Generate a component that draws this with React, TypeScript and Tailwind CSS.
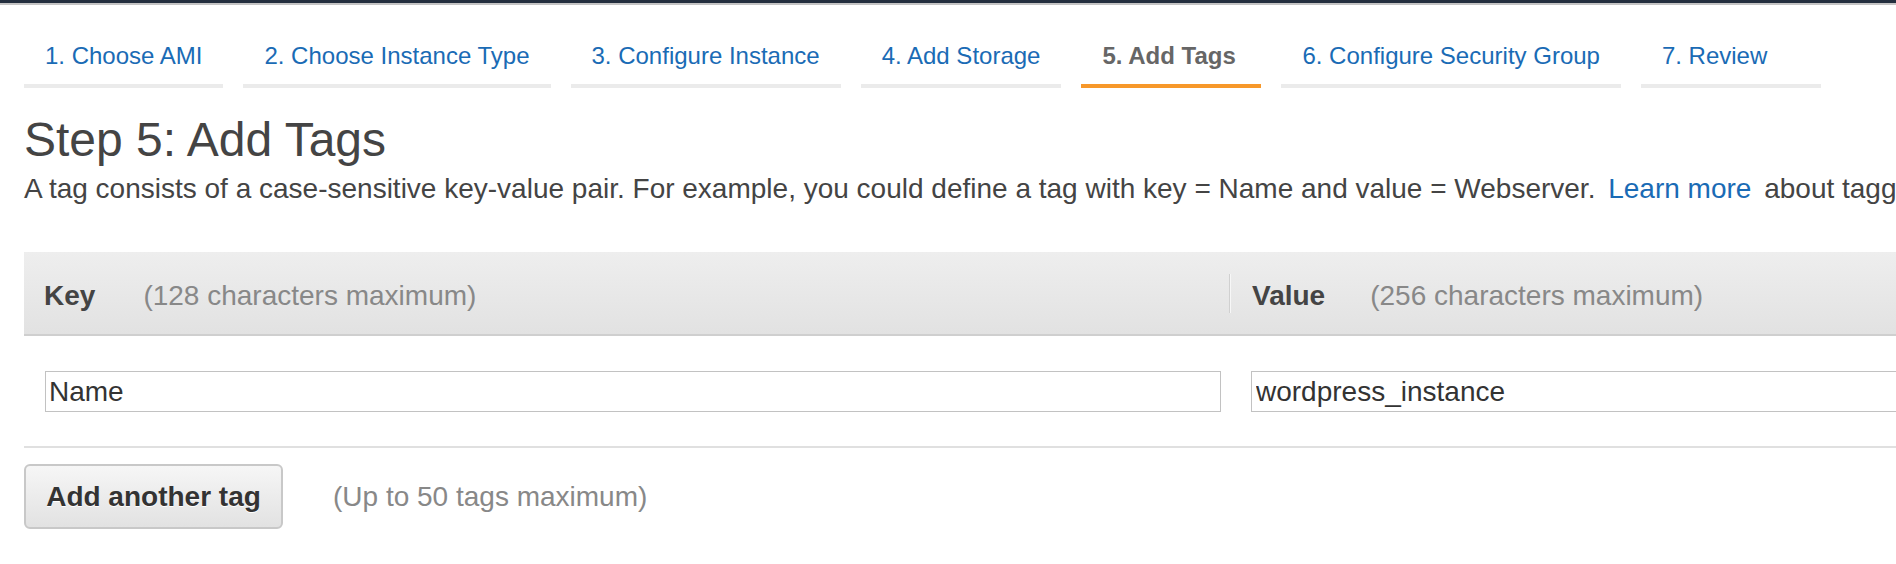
import React from 'react';

const steps = [
  '1. Choose AMI',
  '2. Choose Instance Type',
  '3. Configure Instance',
  '4. Add Storage',
  '5. Add Tags',
  '6. Configure Security Group',
  '7. Review',
];

const App = () => {
  const active = 4;

  return (
    <div className="h-screen overflow-hidden bg-white font-['Liberation_Sans',Arial,sans-serif] text-[#444]">
      <div className="h-[3px] bg-[#232f3e]"></div>
      <div className="h-[2px] bg-[#c4c4c4]"></div>

      <div className="flex gap-[20px] px-[24px] pt-[37px]">
        {steps.map((s, i) => (
          <div
            key={s}
            className={`min-w-[180px] shrink-0 whitespace-nowrap border-b-4 px-[21px] pb-[14px] text-[24px] leading-[28px] ${
              i === active
                ? 'border-[#f7982a] font-bold text-[#666]'
                : 'border-[#ebebeb] text-[#1a6bb5]'
            }`}
          >
            {s}
          </div>
        ))}
      </div>

      <div className="px-[24px]">
        <h1 className="mt-[26px] whitespace-nowrap text-[48px] font-normal leading-[52px] text-[#444]">
          Step 5: Add Tags
        </h1>
        <p className="mt-[7px] whitespace-nowrap text-[28px] leading-[32px] text-[#444]">
          A tag consists of a case-sensitive key-value pair. For example, you
          could define a tag with key = Name and value = Webserver.{' '}
          <a className="mx-[5px] text-[#1a6bb5]">Learn more</a> about tagging
          your Amazon EC2 resources.
        </p>

        <div className="mt-[47px] w-[3000px]">
          <div className="flex h-[84px] border-b-2 border-[#cfcfcf] bg-gradient-to-b from-[#eeeeee] to-[#e2e2e2]">
            <div className="flex w-[1205px] shrink-0 items-start pl-[20px] pt-[28px] text-[28px] leading-[32px]">
              <span className="font-bold text-[#444]">Key</span>
              <span className="ml-[48px] text-[#888]">(128 characters maximum)</span>
            </div>
            <div className="mt-[22px] h-[39px] w-[2px] shrink-0 border-l border-[#d0d0d0] bg-[#f7f7f7]"></div>
            <div className="flex w-[1205px] shrink-0 items-start pl-[21px] pt-[28px] text-[28px] leading-[32px]">
              <span className="font-bold text-[#444]">Value</span>
              <span className="ml-[45px] text-[#888]">(256 characters maximum)</span>
            </div>
          </div>

          <div className="flex border-b-2 border-[#e0e0e0] pt-[35px] pb-[34px]">
            <div className="w-[1207px] shrink-0 pl-[21px]">
              <input
                readOnly
                value="Name"
                className="block h-[41px] w-[1176px] border border-[#c2c2c2] px-[3px] text-[28px] text-[#333] outline-none"
              />
            </div>
            <div className="w-[1205px] shrink-0 pl-[20px]">
              <input
                readOnly
                value="wordpress_instance"
                className="block h-[41px] w-[1180px] border border-[#c2c2c2] px-[4px] text-[28px] text-[#333] outline-none"
              />
            </div>
          </div>
        </div>

        <div className="mt-[16px] flex items-center">
          <button className="h-[65px] w-[259px] rounded-[6px] border-2 border-[#c8c8c8] bg-gradient-to-b from-[#f6f6f6] to-[#e2e2e2] text-[28px] font-bold text-[#333] [text-shadow:0_1px_0_#fff]">
            Add another tag
          </button>
          <span className="ml-[50px] text-[28px] text-[#888]">(Up to 50 tags maximum)</span>
        </div>
      </div>
    </div>
  );
};

export default App;
